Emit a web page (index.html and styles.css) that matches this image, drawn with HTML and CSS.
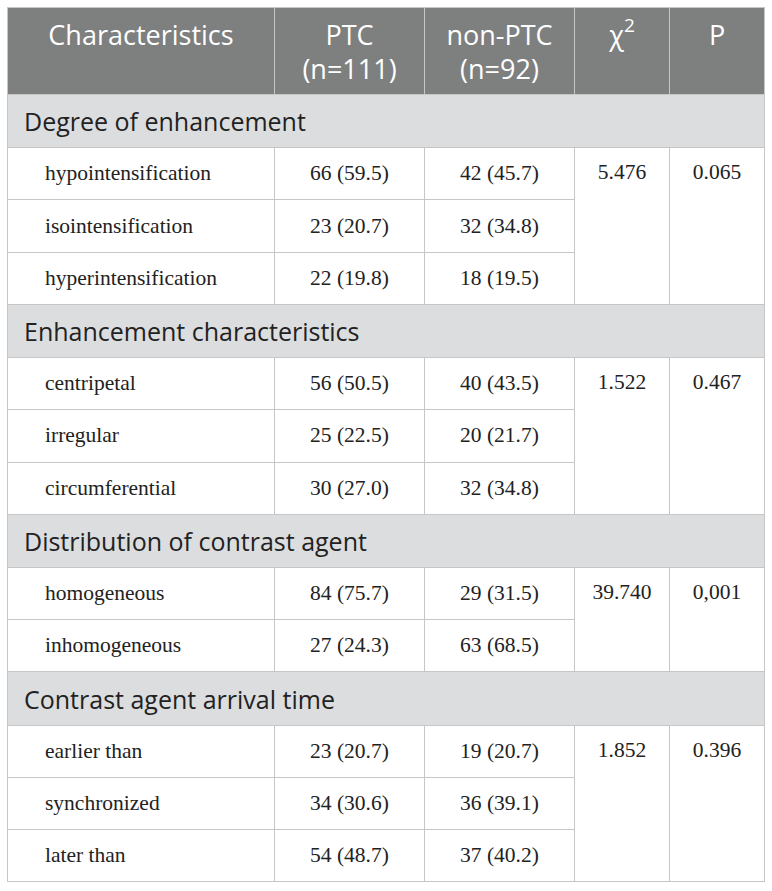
FILE: index.html
```html
<!DOCTYPE html>
<html lang="en">

<head>
  <meta charset="UTF-8">
  <meta name="viewport" content="width=device-width, initial-scale=1.0">
  <title>Contrast enhancement table</title>
  <link rel="stylesheet" href="styles.css">
</head>

<body>

  <div class="page">
    <table class="stats-table">
      <colgroup>
        <col class="col-label">
        <col class="col-group">
        <col class="col-group">
        <col class="col-stat">
        <col class="col-stat">
      </colgroup>
      <thead>
        <tr>
          <th>Characteristics</th>
          <th>PTC<br>(n=111)</th>
          <th>non-PTC<br>(n=92)</th>
          <th>&chi;<sup>2</sup></th>
          <th>P</th>
        </tr>
      </thead>
      <tbody>
        <tr class="section">
          <td colspan="5">Degree of enhancement</td>
        </tr>
        <tr>
          <td class="label">hypointensification</td>
          <td>66 (59.5)</td>
          <td>42 (45.7)</td>
          <td class="stat" rowspan="3">5.476</td>
          <td class="stat" rowspan="3">0.065</td>
        </tr>
        <tr>
          <td class="label">isointensification</td>
          <td>23 (20.7)</td>
          <td>32 (34.8)</td>
        </tr>
        <tr>
          <td class="label">hyperintensification</td>
          <td>22 (19.8)</td>
          <td>18 (19.5)</td>
        </tr>

        <tr class="section">
          <td colspan="5">Enhancement characteristics</td>
        </tr>
        <tr>
          <td class="label">centripetal</td>
          <td>56 (50.5)</td>
          <td>40 (43.5)</td>
          <td class="stat" rowspan="3">1.522</td>
          <td class="stat" rowspan="3">0.467</td>
        </tr>
        <tr>
          <td class="label">irregular</td>
          <td>25 (22.5)</td>
          <td>20 (21.7)</td>
        </tr>
        <tr>
          <td class="label">circumferential</td>
          <td>30 (27.0)</td>
          <td>32 (34.8)</td>
        </tr>

        <tr class="section">
          <td colspan="5">Distribution of contrast agent</td>
        </tr>
        <tr>
          <td class="label">homogeneous</td>
          <td>84 (75.7)</td>
          <td>29 (31.5)</td>
          <td class="stat" rowspan="2">39.740</td>
          <td class="stat" rowspan="2">0,001</td>
        </tr>
        <tr>
          <td class="label">inhomogeneous</td>
          <td>27 (24.3)</td>
          <td>63 (68.5)</td>
        </tr>

        <tr class="section">
          <td colspan="5">Contrast agent arrival time</td>
        </tr>
        <tr>
          <td class="label">earlier than</td>
          <td>23 (20.7)</td>
          <td>19 (20.7)</td>
          <td class="stat" rowspan="3">1.852</td>
          <td class="stat" rowspan="3">0.396</td>
        </tr>
        <tr>
          <td class="label">synchronized</td>
          <td>34 (30.6)</td>
          <td>36 (39.1)</td>
        </tr>
        <tr>
          <td class="label">later than</td>
          <td>54 (48.7)</td>
          <td>37 (40.2)</td>
        </tr>
      </tbody>
    </table>
  </div>

</body>

</html>
```

FILE: styles.css
```css
body {
  margin: 0;
  padding: 0;
  background-color: #fff;
}

.page {
  padding: 7px 8px 8px 7px;
}

.stats-table {
  width: 757px;
  border-collapse: collapse;
  table-layout: fixed;
}

.col-label {
  width: 267px;
}

.col-group {
  width: 150px;
}

.col-stat {
  width: 95px;
}

.stats-table th,
.stats-table td {
  border: 1px solid #c6c6c6;
  padding: 0;
}

/* header */
.stats-table th {
  height: 87px;
  background-color: #7e7f7f;
  color: #fff;
  font-family: 'Open Sans', sans-serif;
  font-weight: 400;
  font-size: 27px;
  line-height: 34px;
  text-align: center;
  vertical-align: top;
  padding-top: 10px;
  box-sizing: border-box;
}

.stats-table th sup {
  font-size: 19px;
  line-height: 0;
  position: relative;
  top: -3px;
}

/* data rows */
.stats-table tbody td {
  height: 51.2px;
  font-family: 'Liberation Serif', 'Times New Roman', serif;
  font-size: 21.5px;
  color: #222;
  text-align: center;
  vertical-align: middle;
}

/* section rows */
.stats-table tbody .section td {
  height: 52.3px;
  background-color: #dcdddf;
  color: #222;
  font-family: 'Open Sans', sans-serif;
  font-size: 25px;
  text-align: left;
  padding-left: 16px;
}

.stats-table tbody td.label {
  text-align: left;
  padding-left: 37px;
}

.stats-table tbody td.stat {
  vertical-align: top;
  padding-top: 12px;
}
```
